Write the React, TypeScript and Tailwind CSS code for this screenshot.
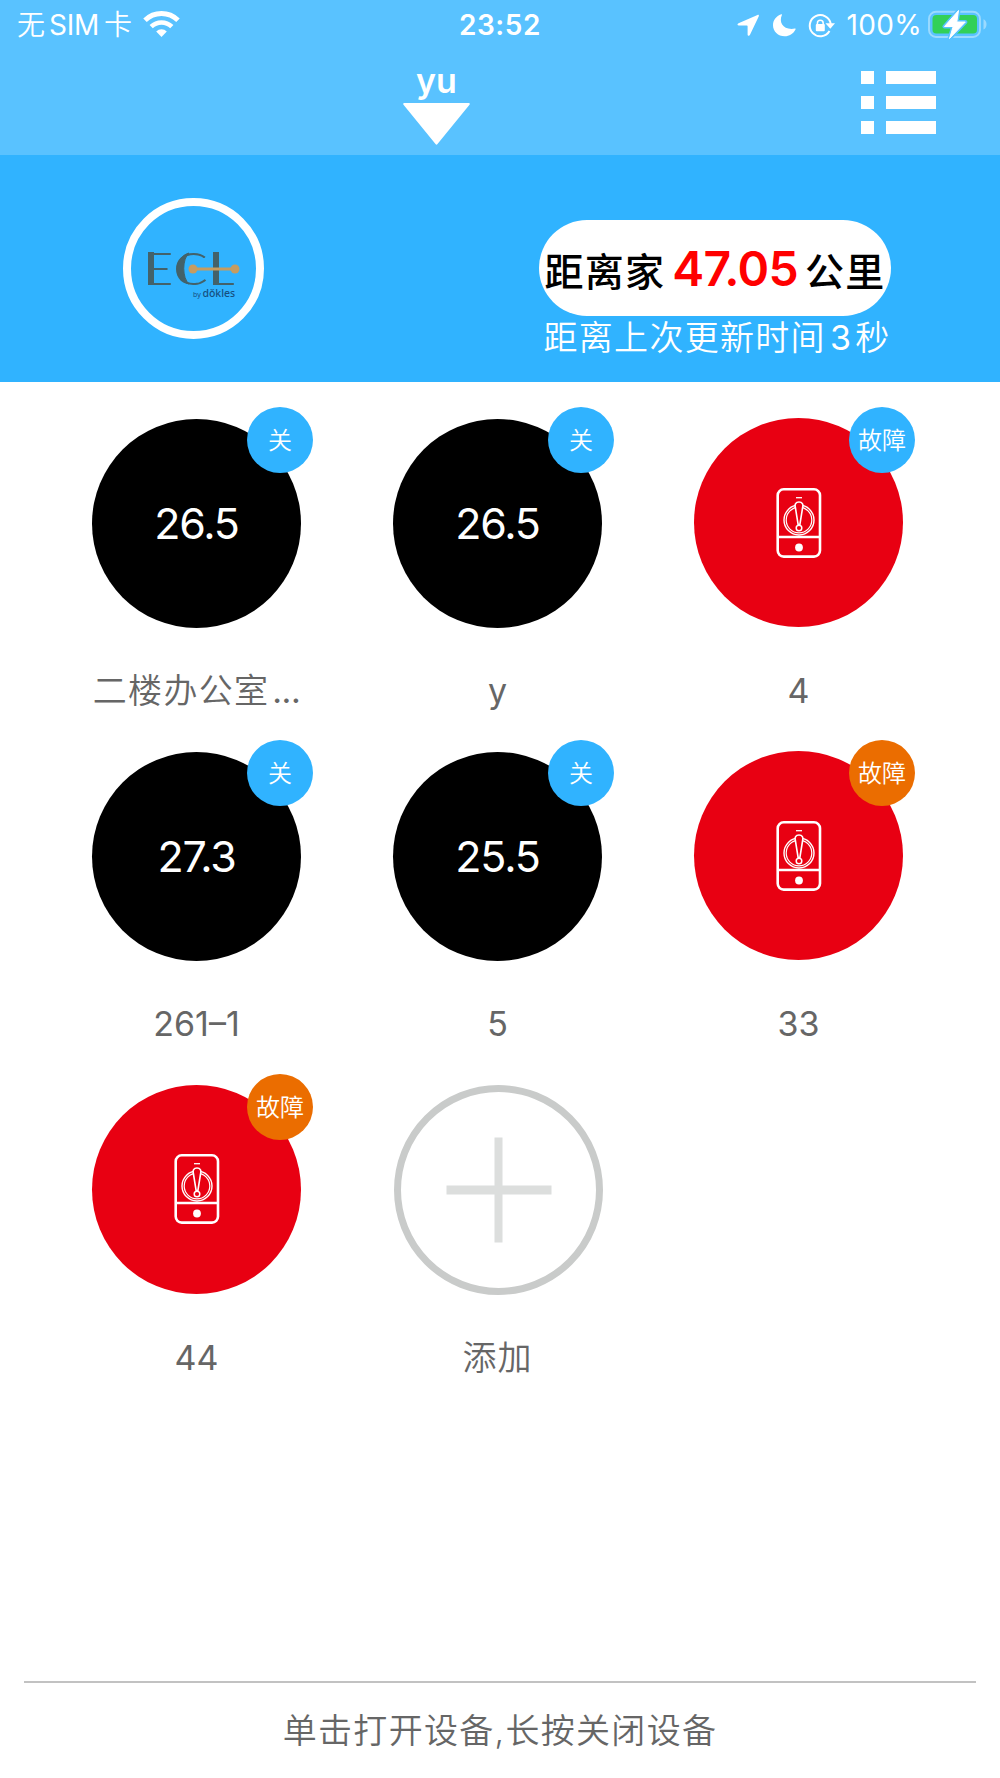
import clsx from "clsx";

type DeviceStatus = "off" | "fault" | "fault-alert";

interface Device {
  id: number;
  name: string;
  truncated?: boolean;
  status: DeviceStatus;
  temperature?: string;
}

const devices: Device[] = [
  { id: 1, name: "二楼办公室", truncated: true, status: "off", temperature: "26.5" },
  { id: 2, name: "y", status: "off", temperature: "26.5" },
  { id: 3, name: "4", status: "fault" },
  { id: 4, name: "261–1", status: "off", temperature: "27.3" },
  { id: 5, name: "5", status: "off", temperature: "25.5" },
  { id: 6, name: "33", status: "fault-alert" },
  { id: 7, name: "44", status: "fault-alert" },
];

function WifiIcon() {
  return (
    <svg width="38" height="28" viewBox="0 0 38 28" fill="none" className="mt-[10px] ml-[11px]">
      <path d="M2 10.300a23.600 23.600 0 0 1 33 0" stroke="#fff" strokeWidth="5" />
      <path d="M8.200 16.600a14.800 14.800 0 0 1 20.600 0" stroke="#fff" strokeWidth="4.600" />
      <path d="M13.200 21.400a7.700 7.700 0 0 1 10.600 0L18.500 27z" fill="#fff" />
    </svg>
  );
}

function StatusIcons() {
  return (
    <svg width="118" height="40" viewBox="0 0 118 40" fill="none">
      {/* location */}
      <path
        d="M21.500 15 2.500 23.200c-1.600.8-1.200 2.300.4 2.300h8c.5 0 .7.2.7.7v8.200c0 1.700 1.700 2 2.400.4l8.700-18.400c.6-1.300-.2-1.800-1.200-1.400z"
        fill="#fff"
      />
      {/* do not disturb */}
      <path
        d="M45.200 14.300c.5-.2 1 .2.700.7-3.400 7.600 1.600 15.500 12.900 13.600.7-.1 1 .3.700.8-2.300 4.300-6.200 6.800-10.800 6.800C42 36.200 37 31.400 37 25.200c0-5 3.200-9.200 8.200-10.900z"
        fill="#fff"
      />
      {/* rotation lock */}
      <path d="M93.500 31A10.600 10.600 0 1 1 94.800 24" stroke="#fff" strokeWidth="2" />
      <path d="M89.500 23.200h9.500l-4.700 5.600z" fill="#fff" />
      <rect x="79.800" y="24" width="9" height="7.300" rx="1" fill="#fff" />
      <path d="M81.400 24.500v-1.300a2.900 2.900 0 0 1 5.800 0v1.300" stroke="#fff" strokeWidth="1.500" />
    </svg>
  );
}

function BatteryIcon() {
  return (
    <svg width="62" height="32" viewBox="0 0 62 32" fill="none" className="mt-[8px] ml-[5px]">
      <rect x="2" y="3.800" width="51" height="25.200" rx="7" stroke="#fff" strokeOpacity=".4" strokeWidth="1.900" />
      <path d="M56.500 11.200c4 1.300 4 8.800 0 10.200z" fill="#fff" fillOpacity=".4" />
      <rect x="5.500" y="7" width="44.500" height="18.500" rx="3.800" fill="#32d058" />
      <path
        d="M31.500 2.500 17.500 18.500h8.700L22.500 30.500 38.300 14h-8.500z"
        fill="#fff"
        stroke="#59c2ff"
        strokeWidth="4"
        strokeLinejoin="round"
      />
      <path
        d="M31.500 2.500 17.500 18.500h8.700L22.500 30.500 38.300 14h-8.500z"
        fill="#fff"
        stroke="#fff"
        strokeLinejoin="round"
      />
    </svg>
  );
}

function StatusBar() {
  return (
    <div className="flex h-[50px] items-start justify-between text-white">
      <div className="flex w-[400px] items-start pl-[17px] text-[28px] leading-[51px]">
        <span className="font-[350]">无</span>
        <span className="ml-[4px] tracking-[-0.3px]">SIM</span>
        <span className="ml-[5px] font-[350]">卡</span>
        <WifiIcon />
      </div>
      <span className="text-[28px] leading-[51px] font-semibold tracking-[0.6px]">23:52</span>
      <div className="flex w-[400px] items-start justify-end pr-[11px] text-[28px] leading-[51px]">
        <StatusIcons />
        <span className="ml-[-7px] tracking-[0.3px]">100%</span>
        <BatteryIcon />
      </div>
    </div>
  );
}

function NavBar() {
  return (
    <header className="h-[155px] bg-[#59c2ff]">
      <StatusBar />
      <div className="flex justify-between pr-[64px] pl-[403px] text-white">
        <div className="flex w-[67px] flex-col items-center pt-[9px]">
          <span className="text-[34px] leading-[43px] font-semibold">yu</span>
          <svg width="67" height="42" viewBox="0 0 67 42" className="mt-px">
            <path d="M1 0h65q1 0 .7 1.500L34.500 41q-1 1.500-2 0L.3 1.500Q0 0 1 0z" fill="#fff" />
          </svg>
        </div>
        <div className="flex flex-col gap-[12px] pt-[20.500px]">
          {[0, 1, 2].map((row) => (
            <div key={row} className="flex gap-[12px]">
              <span className="h-[13px] w-[13px] bg-white" />
              <span className="h-[13px] w-[50px] bg-white" />
            </div>
          ))}
        </div>
      </div>
    </header>
  );
}

function BrandLogo() {
  return (
    <div className="h-[141px] w-[141px] rounded-full border-8 border-white">
      <svg width="125" height="125" viewBox="0 0 125 125">
        <text
          x="11.200 37.500 69.300"
          y="79"
          transform="scale(1.12 1)"
          fill="#43626a"
          fontFamily="Lato"
          fontWeight="300"
          fontSize="46"
        >
          ECL
        </text>
        {/* heavy stems of the wordmark */}
        <path d="M17 46h6v33h-6zM82 46h6v33h-6z" fill="#43626a" />
        <path d="M58 47c-15 4-15 27 0 31-7-6-7-25 0-31z" fill="#43626a" stroke="#43626a" />
        <path d="M62 63h42" stroke="#c69c60" strokeWidth="3" />
        <circle cx="62" cy="63" r="4.500" fill="#c69c60" />
        <circle cx="104" cy="63" r="4.500" fill="#c69c60" />
        <text x="62" y="91" fill="#164f7f" fontFamily="Noto Sans" fontSize="7">
          by
        </text>
        <text x="71.500" y="91" fill="#164f7f" fontFamily="Noto Sans" fontWeight="500" fontSize="10.500" textLength="32.500">
          dǒkles
        </text>
      </svg>
    </div>
  );
}

function HomeBanner() {
  return (
    <section className="flex h-[227px] justify-between bg-[#30b3ff] pr-[109px] pl-[123px]">
      <div className="pt-[43px]">
        <BrandLogo />
      </div>
      <div className="flex w-[352px] flex-col items-center pt-[65px]">
        <div className="flex h-[96px] w-full items-center justify-center rounded-full bg-white font-medium whitespace-nowrap text-black">
          <span className="pt-[8px] text-[39px] leading-[60px] tracking-[1.200px]">距离家</span>
          <span className="ml-[7px] pt-[2px] text-[48px] leading-[60px] font-semibold tracking-[-0.7px] text-[#ff0000]">
            47.05
          </span>
          <span className="ml-[7px] pt-[8px] text-[39px] leading-[60px] tracking-[1.200px]">公里</span>
        </div>
        <p className="ml-[4px] flex text-[34px] leading-[44px] tracking-[1.300px] whitespace-nowrap text-white">
          <span className="font-[350]">距离上次更新时间</span>
          <span className="ml-[4px]">3</span>
          <span className="ml-[3px] font-[350]">秒</span>
        </p>
      </div>
    </section>
  );
}

function FaultIcon() {
  return (
    <svg width="46" height="70" viewBox="0 0 46 70" fill="none" stroke="#fff">
      <rect x="1.700" y="1.300" width="42.300" height="67.300" rx="6" strokeWidth="2.600" />
      <path d="M2 49h42" strokeWidth="2.600" />
      <path d="M20 9.700h6" strokeWidth="1.300" />
      <circle cx="23" cy="32" r="15" strokeWidth="1.400" />
      <circle cx="23" cy="32" r="12.800" strokeWidth="1.200" />
      <path
        d="M23 14c-3.500 0-4.300 2.600-3.700 5l2.800 17.500h1.800L26.700 19c.6-2.400-.2-5-3.700-5z"
        fill="#e80012"
        strokeWidth="1.600"
      />
      <circle cx="23" cy="40" r="2.800" fill="#e80012" strokeWidth="1.500" />
      <circle cx="23" cy="59.500" r="3.900" fill="#fff" stroke="none" />
    </svg>
  );
}

function DeviceTile({ device }: { device: Device }) {
  const isOff = device.status === "off";

  return (
    <div className="flex h-[333.300px] flex-col items-center">
      <div
        className={clsx(
          "relative flex h-[209px] w-[209px] items-center justify-center rounded-full",
          isOff ? "mt-[12px] bg-black" : "mt-[11px] mb-px bg-[#e80012]",
        )}
      >
        {isOff ? (
          <span className="text-[43px] leading-none tracking-[-1.200px] text-white">{device.temperature}</span>
        ) : (
          <FaultIcon />
        )}
        <span
          className={clsx(
            "absolute right-[-12px] flex h-[66px] w-[66px] items-center justify-center rounded-full pt-[2px] text-[24px] leading-none font-[350] text-white",
            isOff ? "top-[-12px]" : "top-[-11px]",
            device.status === "fault-alert" ? "bg-[#eb6d00]" : "bg-[#30b3ff]",
          )}
        >
          {isOff ? "关" : "故障"}
        </span>
      </div>
      {device.truncated ? (
        <p className="mt-[40px] flex text-[34px] leading-[46px] whitespace-nowrap text-[#666]">
          <span className="font-[350] tracking-[1.300px]">{device.name}</span>
          <span className="ml-[3px] tracking-[-0.5px]">...</span>
        </p>
      ) : (
        <p className="mt-[40px] text-[34px] leading-[46px] whitespace-nowrap text-[#666]">{device.name}</p>
      )}
    </div>
  );
}

function AddTile() {
  return (
    <div className="flex flex-col items-center">
      <svg width="209" height="210" viewBox="0 0 209 210" fill="none" className="mt-[11px] ml-px">
        <ellipse cx="104.500" cy="105" rx="101" ry="101.500" stroke="#c9cbca" strokeWidth="7" />
        <path d="M52.500 105h105" stroke="#dcdedd" strokeWidth="9" />
        <path d="M104.500 52.500v105" stroke="#dcdedd" strokeWidth="8" />
      </svg>
      <p className="mt-[40px] text-[34px] leading-[46px] font-[350] tracking-[1px] text-[#666]">添加</p>
    </div>
  );
}

export default function App() {
  return (
    <div className="flex h-[1778px] w-[1000px] flex-col overflow-hidden bg-white font-[Inter,'Noto_Sans_CJK_SC',sans-serif]">
      <NavBar />
      <HomeBanner />
      <main className="ml-[46px] grid w-[903px] flex-1 grid-cols-3 content-start pt-[25px]">
        {devices.map((device) => (
          <DeviceTile key={device.id} device={device} />
        ))}
        <AddTile />
      </main>
      <footer className="mx-[24px] h-[97px] border-t-2 border-[#c2c2c2] pt-[25px] text-center text-[34px] leading-[46px] font-[350] tracking-[1.300px] text-[#666]">
        单击打开设备,长按关闭设备
      </footer>
    </div>
  );
}
